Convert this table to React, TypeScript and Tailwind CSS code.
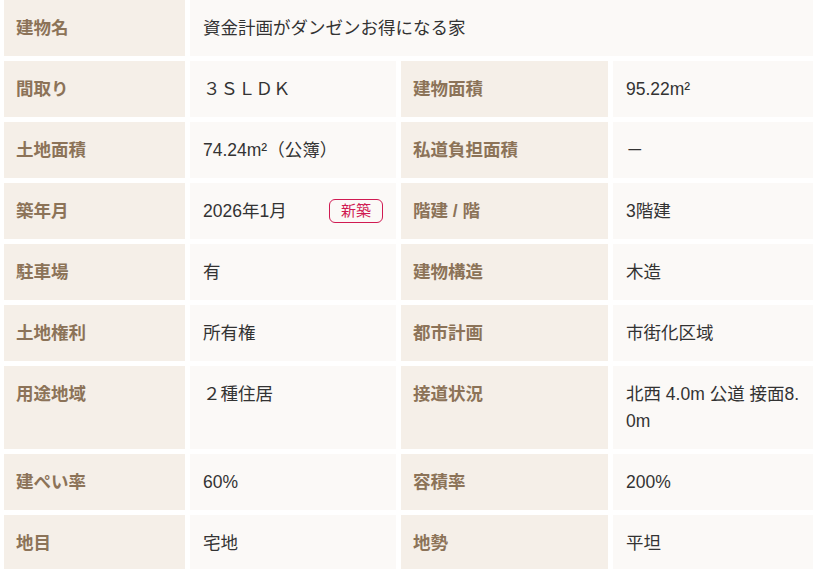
import React from "react";

type Cell = { label: string; value: React.ReactNode };

const rows: Cell[][] = [
  [
    { label: "間取り", value: "３ＳＬＤＫ" },
    { label: "建物面積", value: "95.22m²" },
  ],
  [
    { label: "土地面積", value: "74.24m²（公簿）" },
    { label: "私道負担面積", value: "－" },
  ],
  [
    {
      label: "築年月",
      value: (
        <div className="flex items-center justify-between">
          <span>2026年1月</span>
          <span className="rounded-[6px] border border-[#d01a52] px-[11px] text-[15px] leading-[22px] text-[#d01a52]">
            新築
          </span>
        </div>
      ),
    },
    { label: "階建 / 階", value: "3階建" },
  ],
  [
    { label: "駐車場", value: "有" },
    { label: "建物構造", value: "木造" },
  ],
  [
    { label: "土地権利", value: "所有権" },
    { label: "都市計画", value: "市街化区域" },
  ],
  [
    { label: "用途地域", value: "２種住居" },
    { label: "接道状況", value: "北西 4.0m 公道 接面8.0m" },
  ],
  [
    { label: "建ぺい率", value: "60%" },
    { label: "容積率", value: "200%" },
  ],
  [
    { label: "地目", value: "宅地" },
    { label: "地勢", value: "平坦" },
  ],
];

function Label({ children }: { children: React.ReactNode }) {
  return (
    <div className="bg-[#f5efe8] px-[12px] py-[14.5px] font-bold text-[#8c7358]">
      {children}
    </div>
  );
}

function Value({ children }: { children: React.ReactNode }) {
  return (
    <div className="bg-[#fbf9f7] px-[13px] py-[14.5px] break-all text-[#333333]">
      {children}
    </div>
  );
}

export default function App() {
  return (
    <div
      className="min-h-screen bg-white pl-[4px] text-[17.5px] leading-[27px]"
      style={{ fontFamily: '"Liberation Sans", "Noto Sans CJK JP", sans-serif' }}
    >
      <div className="grid grid-cols-[181px_206px_207px_1fr] gap-[5px]">
        <Label>建物名</Label>
        <div className="col-span-3 bg-[#fbf9f7] px-[13px] py-[14.5px] text-[#333333]">
          資金計画がダンゼンお得になる家
        </div>
        {rows.map((row, i) => (
          <React.Fragment key={i}>
            {row.map((c) => (
              <React.Fragment key={c.label}>
                <Label>{c.label}</Label>
                <Value>{c.value}</Value>
              </React.Fragment>
            ))}
          </React.Fragment>
        ))}
      </div>
    </div>
  );
}
